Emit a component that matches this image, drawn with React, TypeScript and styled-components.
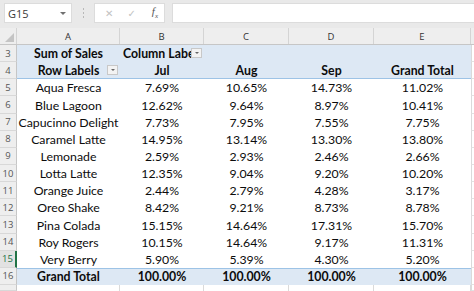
import styled, { createGlobalStyle, css } from 'styled-components';

const GlobalStyle = createGlobalStyle`
  body {
    margin: 0;
    background: #ffffff;
    font-family: Lato, 'Liberation Sans', sans-serif;
    overflow: hidden;
  }
`;

const columns = ['A', 'B', 'C', 'D', 'E'];

const rows = [
  { n: 5, label: 'Aqua Fresca', values: ['7.69%', '10.65%', '14.73%', '11.02%'] },
  { n: 6, label: 'Blue Lagoon', values: ['12.62%', '9.64%', '8.97%', '10.41%'] },
  { n: 7, label: 'Capucinno Delight', values: ['7.73%', '7.95%', '7.55%', '7.75%'] },
  { n: 8, label: 'Caramel Latte', values: ['14.95%', '13.14%', '13.30%', '13.80%'] },
  { n: 9, label: 'Lemonade', values: ['2.59%', '2.93%', '2.46%', '2.66%'] },
  { n: 10, label: 'Lotta Latte', values: ['12.35%', '9.04%', '9.20%', '10.20%'] },
  { n: 11, label: 'Orange Juice', values: ['2.44%', '2.79%', '4.28%', '3.17%'] },
  { n: 12, label: 'Oreo Shake', values: ['8.42%', '9.21%', '8.73%', '8.78%'] },
  { n: 13, label: 'Pina Colada', values: ['15.15%', '14.64%', '17.31%', '15.70%'] },
  { n: 14, label: 'Roy Rogers', values: ['10.15%', '14.64%', '9.17%', '11.31%'] },
  { n: 15, label: 'Very Berry', values: ['5.90%', '5.39%', '4.30%', '5.20%'] },
];

const GRID = '17px 103px 84px 85px 85px 97px 1fr';

export default function App() {
  return (
    <>
      <GlobalStyle />
      <Window>
        <FormulaBar>
          <NameBox>
            <span>G15</span>
            <DropArrow />
          </NameBox>
          <Grip>
            <i />
            <i />
            <i />
          </Grip>
          <FxButtons>
            <FxGlyph>✕</FxGlyph>
            <FxGlyph>✓</FxGlyph>
            <FxLabel>
              f<sub>x</sub>
            </FxLabel>
          </FxButtons>
          <FormulaInput />
        </FormulaBar>

        <Sheet>
          <HeaderRow>
            <Corner>
              <svg width="9" height="9" viewBox="0 0 9 9">
                <polygon points="9,0 9,9 0,9" fill="#c4c4c4" />
              </svg>
            </Corner>
            {columns.map((c) => (
              <ColHead key={c}>{c}</ColHead>
            ))}
            <ColHead $last />
          </HeaderRow>

          <Row $tone="head">
            <RowNum>3</RowNum>
            <Cell $bold>Sum of Sales</Cell>
            <Cell $bold $left>
              Column Labe
              <FilterButton />
            </Cell>
            <Cell />
            <Cell />
            <Cell />
            <Spare />
          </Row>

          <Row $tone="head" $underline>
            <RowNum>4</RowNum>
            <Cell $bold>
              Row Labels
              <FilterButton />
            </Cell>
            <Cell $bold>Jul</Cell>
            <Cell $bold>Aug</Cell>
            <Cell $bold>Sep</Cell>
            <Cell $bold>Grand Total</Cell>
            <Spare />
          </Row>

          {rows.map((r) => (
            <Row key={r.n}>
              <RowNum $active={r.n === 15}>{r.n}</RowNum>
              <Cell>{r.label}</Cell>
              {r.values.map((v, i) => (
                <Cell key={i}>{v}</Cell>
              ))}
              <Spare />
            </Row>
          ))}

          <Row $tone="total">
            <RowNum>16</RowNum>
            <Cell $bold>Grand Total</Cell>
            <Cell $bold>100.00%</Cell>
            <Cell $bold>100.00%</Cell>
            <Cell $bold>100.00%</Cell>
            <Cell $bold>100.00%</Cell>
            <Spare />
          </Row>

          <Row $empty>
            <RowNum />
            <Cell $grid />
            <Cell $grid />
            <Cell $grid />
            <Cell $grid />
            <Cell $grid />
            <Spare />
          </Row>
        </Sheet>
      </Window>
    </>
  );
}

const Window = styled.div`
  width: 474px;
  height: 291px;
  display: flex;
  flex-direction: column;
  overflow: hidden;
  background: #ffffff;
`;

const FormulaBar = styled.div`
  height: 31px;
  box-sizing: border-box;
  padding: 3px 0 5px 4px;
  display: flex;
  align-items: stretch;
  background: #e9e9e9;
`;

const NameBox = styled.div`
  width: 68px;
  box-sizing: border-box;
  background: #ffffff;
  border: 1px solid #dcdcdc;
  display: flex;
  align-items: center;
  justify-content: space-between;
  padding: 0 5px 0 3px;
  font-family: 'Open Sans', sans-serif;
  font-size: 11px;
  color: #3a3a3a;
`;

const DropArrow = styled.span`
  width: 0;
  height: 0;
  border-left: 3px solid transparent;
  border-right: 3px solid transparent;
  border-top: 3px solid #707070;
`;

const Grip = styled.div`
  width: 22px;
  display: flex;
  flex-direction: column;
  align-items: center;
  justify-content: center;
  gap: 2px;

  i {
    width: 1px;
    height: 2px;
    background: #b8b8b8;
  }
`;

const FxButtons = styled.div`
  width: 71px;
  box-sizing: border-box;
  background: #ffffff;
  border: 1px solid #dcdcdc;
  display: flex;
  align-items: center;
  padding: 0 6px 0 10px;
  gap: 14px;
`;

const FxGlyph = styled.span`
  font-family: 'DejaVu Sans', sans-serif;
  font-size: 10px;
  color: #c2c2c2;
`;

const FxLabel = styled.span`
  margin-left: auto;
  font-family: 'Liberation Serif', serif;
  font-style: italic;
  font-size: 11px;
  color: #555555;

  sub {
    font-size: 7px;
  }
`;

const FormulaInput = styled.div`
  flex: 1;
  margin-left: 7px;
  background: #ffffff;
  border: 1px solid #dcdcdc;
  border-right: none;
`;

const Sheet = styled.div`
  display: flex;
  flex-direction: column;
`;

const HeaderRow = styled.div`
  display: grid;
  grid-template-columns: ${GRID};
  height: 17px;
  background: #eeeeee;
  border-bottom: 1px solid #c6c6c6;
  box-sizing: border-box;
`;

const Corner = styled.div`
  display: flex;
  align-items: flex-end;
  justify-content: flex-end;
  padding: 0 2px 2px 0;
  border-right: 1px solid #d4d4d4;
`;

const ColHead = styled.div<{ $last?: boolean }>`
  display: flex;
  align-items: center;
  justify-content: center;
  font-family: 'Open Sans', sans-serif;
  font-size: 9.5px;
  color: #333333;
  border-right: ${(p) => (p.$last ? 'none' : '1px solid #d4d4d4')};
`;

const Row = styled.div<{ $tone?: 'head' | 'total'; $underline?: boolean; $empty?: boolean }>`
  display: grid;
  grid-template-columns: ${GRID};
  height: ${(p) => (p.$empty ? '6px' : '17.15px')};
  box-sizing: border-box;
  color: #0c0c0c;
  font-size: 12.3px;
  ${(p) =>
    p.$tone &&
    css`
      & > div:not(:first-child):not(:last-child) {
        background: #dde8f4;
      }
    `}
  ${(p) =>
    p.$underline &&
    css`
      & > div:not(:first-child):not(:last-child) {
        box-shadow: inset 0 -1px 0 #9dc3e6;
      }
    `}
  ${(p) =>
    p.$tone === 'total' &&
    css`
      & > div:not(:first-child):not(:last-child) {
        box-shadow: inset 0 1px 0 #9dc3e6;
      }
    `}
`;

const RowNum = styled.div<{ $active?: boolean }>`
  display: flex;
  align-items: center;
  justify-content: center;
  font-family: 'Open Sans', sans-serif;
  font-size: 9.5px;
  color: ${(p) => (p.$active ? '#217346' : '#555555')};
  background: ${(p) => (p.$active ? '#e2e2e2' : '#eeeeee')};
  border-right: ${(p) => (p.$active ? '2px solid #217346' : '1px solid #c6c6c6')};
  border-bottom: 1px solid #d8d8d8;
  box-sizing: border-box;
`;

const Cell = styled.div<{ $bold?: boolean; $left?: boolean; $grid?: boolean }>`
  position: relative;
  display: flex;
  align-items: center;
  justify-content: ${(p) => (p.$left ? 'flex-start' : 'center')};
  padding-left: ${(p) => (p.$left ? '3px' : '0')};
  font-weight: ${(p) => (p.$bold ? 700 : 400)};
  white-space: nowrap;
  overflow: hidden;
  border-right: ${(p) => (p.$grid ? '1px solid #dadada' : 'none')};
`;

const FilterButton = styled.span`
  position: absolute;
  right: 2px;
  top: 3px;
  width: 11px;
  height: 10px;
  box-sizing: border-box;
  background: #f3f3f3;
  border: 1px solid #c8c8c8;

  &::after {
    content: '';
    position: absolute;
    left: 2.5px;
    top: 3px;
    border-left: 2.5px solid transparent;
    border-right: 2.5px solid transparent;
    border-top: 2.5px solid #666666;
  }
`;

const Spare = styled.div`
  border-left: 1px solid #dadada;
  border-bottom: 1px solid #e2e2e2;
  background: #ffffff;
`;
